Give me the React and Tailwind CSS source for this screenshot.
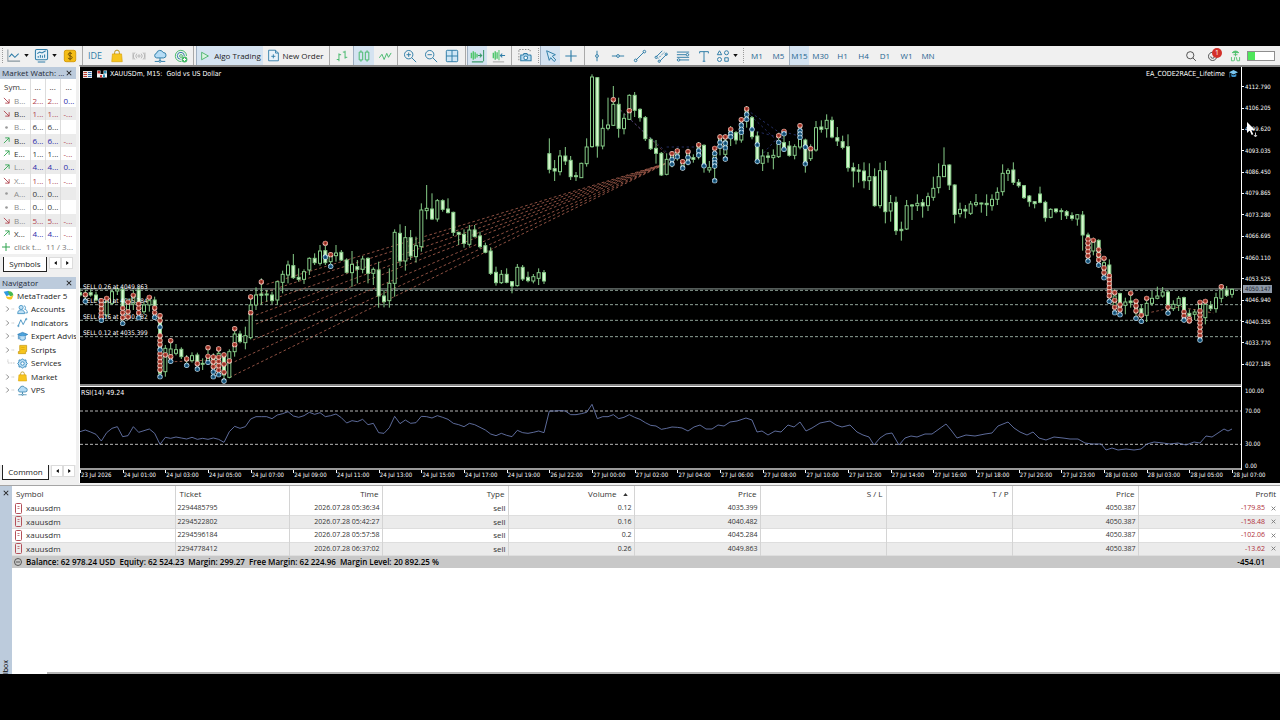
import React from "react";

const FILLED = 1;

/* Bars are [high, bodyTop, bodyBottom, low, filled]; x advances 16 units per bar. */
const SEGMENTS = [
  {
    from: 0,
    base: 339,
    bars: [
      [325, 338, 345, 350, 1], [330, 340, 350, 365, 0], [328, 338, 345, 350, 1], [335, 345, 360, 364, 1],
      [355, 360, 415, 425, 0], [348, 365, 405, 412, 0], [328, 335, 370, 375, 0], [322, 327, 333, 345, 0],
      [325, 328, 380, 425, 1], [355, 370, 400, 418, 0], [330, 352, 372, 390, 0], [322, 330, 370, 405, 1],
      [365, 375, 395, 402, 0], [345, 362, 375, 395, 0], [350, 360, 376, 415, 1], [400, 405, 580, 592, 1],
      [495, 505, 575, 590, 0], [480, 507, 525, 540, 0], [492, 509, 520, 526, 0], [502, 508, 530, 537, 1],
      [525, 535, 541, 552, 1], [517, 527, 542, 548, 0], [518, 525, 550, 564, 1], [535, 550, 553, 570, 0],
      [500, 528, 542, 555, 0], [520, 530, 560, 592, 1], [505, 520, 575, 588, 0], [518, 530, 585, 603, 1],
      [508, 515, 592, 595, 0], [440, 462, 515, 530, 0], [452, 462, 485, 490, 1], [440, 467, 488, 508, 0],
      [350, 375, 473, 478, 0], [322, 345, 375, 390, 0], [295, 342, 346, 375, 1], [330, 342, 345, 365, 0],
      [335, 345, 362, 372, 1], [302, 305, 360, 375, 0], [272, 283, 307, 340, 0], [242, 255, 285, 310, 0],
      [222, 257, 293, 297, 1], [265, 292, 298, 305, 1], [268, 275, 298, 312, 0], [232, 235, 270, 285, 0],
      [220, 235, 248, 255, 1], [195, 213, 250, 257, 0], [185, 212, 248, 255, 1], [218, 225, 245, 262, 0],
      [195, 219, 227, 245, 0], [210, 217, 240, 243, 1], [235, 240, 277, 280, 1], [213, 253, 278, 320, 0],
      [240, 260, 268, 310, 1], [228, 237, 268, 280, 0], [232, 235, 280, 310, 1], [262, 268, 280, 315, 0],
      [245, 270, 348, 383, 1], [330, 348, 365, 382, 1], [265, 310, 362, 383, 0], [148, 157, 310, 350, 0],
      [133, 160, 243, 258, 1], [138, 173, 243, 272, 0], [150, 173, 228, 240, 1], [170, 197, 230, 248, 0],
      [70, 90, 200, 215, 0], [15, 85, 92, 118, 0], [40, 87, 117, 120, 1], [57, 62, 117, 125, 0],
      [58, 62, 88, 95, 1], [55, 87, 98, 100, 1], [95, 97, 157, 168, 1], [155, 157, 163, 195, 1],
      [148, 163, 190, 203, 1], [135, 150, 193, 200, 0], [135, 150, 170, 172, 1], [155, 168, 200, 205, 1],
      [188, 197, 217, 220, 1], [202, 213, 280, 285, 1], [260, 277, 308, 317, 1], [270, 283, 308, 312, 0],
      [265, 283, 307, 310, 1], [303, 305, 318, 340, 1], [252, 262, 317, 320, 0], [255, 262, 297, 303, 1],
      [275, 292, 302, 307, 1], [282, 290, 303, 310, 0], [265, 278, 295, 315, 0], [270, 278, 303, 312, 1],
    ],
  },
  {
    from: 88,
    base: -3,
    bars: [
      [217, 263, 310, 322, 1], [282, 308, 315, 345, 1], [252, 270, 317, 328, 0], [243, 270, 285, 297, 1],
      [270, 283, 332, 342, 1], [318, 329, 332, 345, 1], [290, 292, 335, 336, 0], [217, 243, 293, 302, 0],
      [25, 33, 242, 245, 0], [33, 35, 240, 275, 1], [160, 187, 240, 250, 0], [95, 177, 187, 193, 0],
      [60, 115, 178, 180, 0], [95, 115, 187, 215, 1], [143, 157, 188, 205, 0], [85, 88, 160, 162, 0],
      [78, 88, 133, 153, 1], [127, 130, 155, 167, 1], [150, 155, 218, 225, 1], [215, 220, 248, 252, 1],
      [222, 247, 262, 293, 1], [258, 262, 327, 330, 1], [262, 280, 325, 328, 0], [255, 268, 290, 304, 0],
      [248, 260, 275, 284, 0], [280, 285, 300, 312, 0], [248, 262, 285, 298, 0], [265, 275, 280, 290, 1],
      [228, 245, 265, 280, 0], [235, 238, 300, 320, 1], [285, 305, 312, 320, 0], [240, 262, 300, 348, 0],
      [205, 215, 245, 268, 0], [206, 225, 265, 285, 0], [180, 190, 215, 240, 0], [195, 200, 222, 235, 1],
      [155, 175, 222, 230, 0], [120, 135, 165, 185, 0], [150, 155, 212, 220, 1], [197, 210, 287, 295, 1],
      [250, 270, 292, 315, 0], [258, 270, 274, 290, 1], [250, 268, 275, 310, 0], [200, 235, 272, 276, 0],
      [195, 230, 250, 255, 1], [225, 240, 268, 272, 1], [235, 242, 268, 280, 0], [172, 190, 243, 250, 0],
      [218, 222, 292, 320, 1], [235, 252, 278, 285, 0], [165, 185, 252, 257, 0], [163, 183, 190, 200, 1],
      [145, 163, 188, 215, 0], [152, 163, 213, 217, 1], [183, 215, 225, 240, 1],
    ],
  },
  {
    from: 143,
    base: 99,
    bars: [
      [107, 125, 142, 148, 1], [103, 140, 203, 215, 1], [188, 203, 213, 262, 1], [192, 210, 214, 248, 1],
      [187, 213, 242, 265, 1], [190, 230, 242, 270, 0], [205, 230, 317, 320, 1], [188, 212, 317, 325, 0],
      [183, 212, 335, 370, 1], [285, 308, 333, 365, 0], [290, 307, 392, 405, 1], [365, 388, 392, 422, 1],
      [300, 317, 387, 390, 0], [312, 315, 318, 360, 1], [283, 310, 317, 333, 0], [297, 308, 318, 353, 1],
      [278, 290, 317, 333, 0], [230, 265, 292, 302, 0], [190, 230, 263, 280, 0], [142, 196, 230, 230, 0],
      [193, 195, 255, 270, 1], [253, 255, 343, 370, 1], [308, 328, 341, 352, 0], [315, 328, 333, 355, 1],
      [303, 312, 340, 345, 0], [282, 308, 314, 320, 0], [308, 309, 312, 338, 1], [283, 310, 314, 348, 1],
      [283, 298, 317, 332, 0], [262, 277, 298, 315, 0], [193, 220, 275, 287, 0], [205, 212, 220, 243, 0],
      [187, 210, 247, 255, 1], [237, 247, 257, 263, 1], [255, 257, 293, 297, 1], [285, 288, 305, 320, 1],
      [303, 305, 311, 325, 1], [260, 282, 307, 310, 1], [302, 307, 353, 365, 1], [325, 328, 352, 355, 0],
      [325, 327, 335, 340, 1], [325, 332, 335, 360, 1], [330, 335, 347, 357, 1], [337, 347, 355, 362, 1],
      [342, 344, 357, 377, 0], [333, 345, 405, 452, 1],
    ],
  },
  {
    from: 189,
    base: -3,
    bars: [
      [500, 507, 575, 590, 1], [515, 525, 555, 568, 0], [520, 523, 575, 597, 1], [570, 590, 620, 635, 0],
      [580, 597, 690, 706, 1], [670, 690, 725, 740, 0], [680, 683, 725, 748, 1], [695, 708, 718, 745, 0],
      [680, 705, 710, 725, 1], [698, 710, 740, 757, 0], [715, 728, 750, 766, 1], [698, 712, 748, 768, 0],
      [675, 697, 712, 720, 0], [662, 690, 697, 700, 0], [663, 678, 690, 695, 0], [672, 678, 725, 742, 1],
      [703, 715, 728, 735, 0], [690, 697, 718, 735, 0], [692, 695, 735, 762, 1], [730, 742, 750, 760, 1],
      [730, 738, 745, 762, 0], [705, 715, 800, 822, 0], [710, 715, 755, 775, 0], [705, 718, 728, 735, 1],
      [680, 695, 728, 740, 0], [660, 672, 697, 710, 0], [660, 672, 688, 693, 1], [668, 670, 685, 695, 0],
    ],
  },
];

/* Deals are [bar, sell levels, buy levels]. */
const DEALS = [
  {
    base: 339,
    rows: [
      [1, [344], [364]], [4, [362, 374, 387, 400, 412], [421]], [5, [355], []], [8, [385, 398, 413], [430]],
      [9, [367, 395, 411], []], [10, [346], []], [11, [372, 385, 399], [413]], [13, [352], []],
      [14, [384, 398], [412]], [15, [407, 422, 467, 482, 494, 522, 534, 546, 558, 570], [441, 509, 590]],
      [16, [525], []], [17, [482, 530], [544]], [20, [537], [556]], [22, [551], [567]], [24, [503, 529], [547]],
      [25, [531, 546, 560], [575, 590]], [26, [507, 532, 545, 558, 571], [584]], [27, [525, 553, 577], [603]],
      [28, [543], []], [29, [446, 494], []], [32, [351, 398], []], [34, [306], []], [46, [190], [231]],
      [47, [224], [259]],
    ],
  },
  {
    base: -3,
    rows: [
      [100, [101], []], [103, [134], []], [111, [263], [280, 294]], [112, [255], [272]], [113, [287], [306]],
      [114, [257], [274, 289]], [116, [237], [254, 267]], [117, [], [299]],
      [119, [247], [262, 280, 290, 300, 344]], [120, [213], [229, 241]], [121, [213], [231, 245, 279]],
      [122, [190], [203, 212]], [124, [161], [177, 190, 199]], [125, [129], [145, 160]], [126, [], [190]],
      [127, [], [236, 286]], [131, [209], [229]], [132, [196], [203, 250]], [135, [179], [194, 204, 214]],
      [136, [], [243, 293]], [137, [248], []],
      [189, [520, 532, 545, 557, 570], [585]], [190, [523], []], [191, [551, 567, 582], [597]],
      [192, [577, 606, 620], [635]], [193, [630, 642, 654, 666, 678, 690], [706]], [194, [680, 703, 724], [740]],
      [195, [716, 731], [746]], [197, [682], []], [198, [706, 720, 735], [757]], [199, [748], [766]],
      [200, [697], []], [204, [724], [741]], [207, [738, 750], [762]], [208, [758, 765], []],
      [210, [709, 735, 748, 760, 772, 784, 797, 809], [822]], [211, [706], []], [214, [662], []],
    ],
  },
];

/* Opening points of the trades that all closed at bar 110. */
const FAN = [[560, 652], [528, 684], [528, 714], [528, 744], [528, 771], [519, 819], [464, 884], [449, 931]];

const ORDERS = [
  { y: 670, label: "SELL 0.26 at 4049.863" },
  { y: 713, label: "SELL 0.20 at 4045.284" },
  { y: 760, label: "SELL 0.16 at 4040.482" },
  { y: 809, label: "SELL 0.12 at 4035.399" },
];

const RSI_HEAD = [
  155, 150, 156, 163, 183, 158, 145, 140, 170, 167, 140, 157, 152, 147, 160, 193, 172, 175, 171, 174, 177, 172, 178,
  175, 178, 174, 178, 187, 155, 139, 145, 140, 117, 110, 110, 110, 116, 105, 101, 95, 108, 112, 107, 97, 103, 98, 110,
  107, 102, 113, 129, 122, 125, 118, 134, 130, 158, 160, 143, 109, 131, 120, 130, 128, 109, 110, 114, 107, 112, 118,
  130, 134, 140, 130, 134, 142, 150, 162, 167, 160, 166, 170, 151, 158, 160, 157, 153, 158, 93, 93, 92, 93, 104, 104,
  101, 97, 73, 116, 110, 110, 104, 116, 112, 104, 112, 118, 128, 136, 138, 148, 145, 141, 142,
];
const RSI_TAIL = [
  [682, 428], [688, 431], [694, 427], [700, 425], [706, 429], [712, 429], [718, 425], [724, 426], [730, 422],
  [737, 421], [746, 418], [752, 420], [757, 432], [762, 431], [768, 435], [775, 431], [781, 432], [788, 425],
  [794, 427], [800, 422], [806, 431], [812, 428], [820, 423], [830, 421], [836, 425], [842, 427], [850, 425],
  [857, 432], [863, 435], [869, 437], [874, 445], [880, 438], [886, 434], [892, 433], [899, 445], [905, 438],
  [911, 436], [917, 437], [925, 434], [932, 434], [939, 429], [946, 424], [951, 430], [957, 438], [966, 435],
  [975, 436], [985, 434], [992, 433], [998, 426], [1008, 422], [1014, 428], [1020, 432], [1027, 435], [1033, 432],
  [1039, 438], [1046, 440], [1054, 437], [1063, 438], [1070, 439], [1078, 439], [1085, 443], [1092, 444],
  [1101, 444], [1106, 450], [1112, 448], [1118, 450], [1126, 449], [1134, 450], [1141, 449], [1147, 444],
  [1154, 442], [1163, 443], [1170, 444], [1178, 443], [1186, 445], [1194, 442], [1200, 443], [1206, 436],
  [1212, 437], [1218, 433], [1224, 429], [1228, 431], [1232, 429],
];
const RSI_POINTS = RSI_HEAD.map((y, i) => `${i * 16},${y - 21}`)
  .concat(RSI_TAIL.map(([x, y]) => `${(x - 80) * 3},${(y - 387) * 3}`))
  .join(" ");

const PRICES = [
  "4112.790", "4106.205", "4099.620", "4093.035", "4086.450", "4079.865", "4073.280", "4066.695", "4060.110",
  "4053.525", "4046.940", "4040.355", "4033.770", "4027.185",
];

const TIMES = [
  "23 Jul 2026", "24 Jul 01:00", "24 Jul 03:00", "24 Jul 05:00", "24 Jul 07:00", "24 Jul 09:00", "24 Jul 11:00",
  "24 Jul 13:00", "24 Jul 15:00", "24 Jul 17:00", "24 Jul 19:00", "26 Jul 22:00", "27 Jul 00:00", "27 Jul 02:00",
  "27 Jul 04:00", "27 Jul 06:00", "27 Jul 08:00", "27 Jul 10:00", "27 Jul 12:00", "27 Jul 14:00", "27 Jul 16:00",
  "27 Jul 18:00", "27 Jul 20:00", "27 Jul 23:00", "28 Jul 01:00", "28 Jul 03:00", "28 Jul 05:00", "28 Jul 07:00",
];

const CHART_FONT = "font-['DejaVu_Sans_Condensed','DejaVu_Sans',sans-serif]";

function Glyph({ children, className = "size-[14px] text-[#2f7da8]" }) {
  return (
    <svg
      viewBox="0 0 16 16"
      fill="none"
      stroke="currentColor"
      strokeWidth="1.1"
      className={`shrink-0 ${className}`}
      aria-hidden="true"
    >
      {children}
    </svg>
  );
}

const Caret = () => (
  <svg viewBox="0 0 6 4" className="h-[3px] w-[5px] shrink-0" aria-hidden="true">
    <path d="M0 0h6L3 4z" fill="#111" />
  </svg>
);

function Tool({ label, active, className = "w-[21px]", children }) {
  return (
    <button
      type="button"
      aria-label={label}
      className={`flex h-full shrink-0 items-center justify-center whitespace-nowrap ${className} ${
        active ? "border-l border-[#9fb0c2] bg-[#d5e3f1]" : ""
      }`}
    >
      {children}
    </button>
  );
}

const Sep = ({ className = "w-1" }) => (
  <span className={`flex h-full shrink-0 justify-center ${className}`}>
    <span className="h-full w-px bg-[#a9a9a9]" />
  </span>
);
const Grip = ({ className = "w-1" }) => (
  <span className={`flex h-full shrink-0 justify-center py-[2px] ${className}`}>
    <span className="h-full border-l border-dotted border-[#9a9a9a]" />
  </span>
);

const GREEN = "size-[14px] text-[#46b96b]";

function Bag({ className = "size-[14px]" }) {
  return (
    <Glyph className={className}>
      <path d="M5.3 6V4a2.7 2.7 0 0 1 5.4 0v2" stroke="#b8900c" />
      <path d="M2.8 5.6h10.4l.8 8.9H2z" fill="#f7c51e" stroke="#d9a40b" strokeWidth=".8" />
    </Glyph>
  );
}

function Cloud({ className }) {
  return (
    <Glyph className={className}>
      <path d="M4.2 10.2a2.7 2.7 0 0 1-.2-5.3A4 4 0 0 1 11.6 4a3.1 3.1 0 0 1 .4 6.2z" fill="#b5dcf5" />
      <path d="M8 10.2v3M2 14.2h4.7M9.3 14.2H14" />
      <circle cx="8" cy="14" r="1.2" />
    </Glyph>
  );
}

function Toolbar() {
  return (
    <header className="flex h-[19px] shrink-0 items-center overflow-hidden bg-[#f0f0f0] text-[8px] leading-[12px] text-[#1d1d1d]">
      <Grip />
      <Tool label="Chart profile" className="w-[27px] gap-[3px]">
        <Glyph className="size-[15px] text-[#87969f]">
          <path d="M2 1.5v12.5h13" />
          <path d="M3.5 9.5 6 6.5l3.5 3.5L13.5 6" stroke="#2f7da8" />
        </Glyph>
        <Caret />
      </Tool>
      <Tool label="Templates" className="w-7 gap-[3px]">
        <Glyph className="size-[15px] text-[#2f7da8]">
          <rect x="1.5" y="1.5" width="13" height="11" rx="1.5" fill="#e6f1f8" />
          <path d="m3.5 6 2.5-1.7 2.5 1 4-2.3M4.5 10.5v-2m2.3 2V7.5m2.2 3V8m2.3 2.500V7M4 15h8" />
        </Glyph>
        <Caret />
      </Tool>
      <Tool label="Trade accounts" className="w-[22px]">
        <Glyph className="size-[14px]">
          <rect x="1.5" y="1.500" width="13" height="13" rx="2" fill="#f4bd16" stroke="#d79d08" />
          <path d="M10.300 5.600C9.600 4 6 4.100 6 6.100c0 2.200 4.500 1.400 4.500 3.700 0 2.200-4.200 2.100-4.900.3M8.100 3.200v9.700" stroke="#6f4d00" />
        </Glyph>
      </Tool>
      <Sep className="w-[3px]" />
      <Tool label="IDE" className="w-[22px] text-[9px] text-[#2f7da8]">IDE</Tool>
      <Tool label="Market" className="w-[22px]"><Bag /></Tool>
      <Tool label="Signals">
        <Glyph className="size-[14px] text-[#b4b4b4]">
          <circle cx="8" cy="8" r="1.300" />
          <path d="M5.500 5.300a4 4 0 0 0 0 5.400m5-5.400a4 4 0 0 1 0 5.400M3.300 4a6 6 0 0 0 0 8m9.400-8a6 6 0 0 1 0 8M1.200 4v8m13.600-8v8" />
        </Glyph>
      </Tool>
      <Tool label="Virtual hosting" className="w-[22px]"><Cloud className="size-[14px] text-[#2f7da8]" /></Tool>
      <Tool label="Copy signals" className="w-5">
        <Glyph className={GREEN}>
          <path d="M8.500 14.300A6.400 6.400 0 1 1 14.300 8" />
          <path d="M7.500 11.800A4 4 0 1 1 11.800 8" stroke="#2f7da8" />
          <circle cx="8" cy="8" r="1.600" />
          <circle cx="12" cy="12" r="3.300" fill="#43b765" stroke="none" />
          <path d="M12 10.200v3.600M10.200 12h3.600" stroke="#fff" />
        </Glyph>
      </Tool>
      <Sep className="w-[5px]" />
      <Tool label="Algo Trading" active className="w-[67px] gap-[3px]">
        <Glyph className="size-[12px] text-[#3cae60]"><path d="M3.500 3v10L12.500 8z" fill="#d9f3df" /></Glyph>
        <span>Algo Trading</span>
      </Tool>
      <Tool label="New Order" className="w-16 gap-[3px]">
        <Glyph className="size-[13px] text-[#2f7da8]">
          <path d="M2 1.500h8.500L14 5v9.500H2z" fill="#e9f3fa" />
          <path d="M10.500 1.500V5H14M7.800 6.500v5M5.300 9h5" />
        </Glyph>
        <span>New Order</span>
      </Tool>
      <Sep />
      <Tool label="Bar chart" className="w-[22px]">
        <Glyph className={GREEN}><path d="M4.500 5v9M2 12h2.500M4.500 6.500H7M11.500 2v9M9 3.500h2.500M11.500 9.500H14" /></Glyph>
      </Tool>
      <Tool label="Candlesticks" active>
        <Glyph className={GREEN}><path d="M2.500 3.500h4v9h-4zM9.500 3.500h4v9h-4zM4.500 1.500v2m0 9v2M11.500 1.500v2m0 9v2" /></Glyph>
      </Tool>
      <Tool label="Line chart">
        <Glyph className={GREEN}><path d="m1.500 10 3-4 2.500 6 3-7 2 4.500L15 4.500" /></Glyph>
      </Tool>
      <Sep />
      <Tool label="Zoom in">
        <Glyph><circle cx="6.500" cy="6.500" r="4.800" /><path d="m10 10 5 5M6.500 4v5M4 6.500h5" /></Glyph>
      </Tool>
      <Tool label="Zoom out">
        <Glyph><circle cx="6.500" cy="6.500" r="4.800" /><path d="m10 10 5 5M4 6.500h5" /></Glyph>
      </Tool>
      <Tool label="Tile windows" className="w-[22px]">
        <Glyph><rect x="1.500" y="1.500" width="13" height="13" rx="1" fill="#cfe6f5" /><path d="M8 1.500v13M1.500 8h13" /></Glyph>
      </Tool>
      <Sep />
      <Tool label="Auto scroll" active className="w-5">
        <Glyph className="size-[15px] text-[#4fc76c]">
          <path d="M1.500 5v6M3.500 3.500v9M5.500 4.500v7M7.500 6v4" strokeWidth="1.500" />
          <path d="M8.500 8h4m-2-2 2 2-2 2M14.500 2v12M2 14.800h12" stroke="#3a9a6a" />
        </Glyph>
      </Tool>
      <Tool label="Chart shift" className="w-[23px]">
        <Glyph className="size-[15px] text-[#4fc76c]">
          <path d="M2.500 5v6M4.500 3.500v9M6.500 4.500v7" strokeWidth="1.500" />
          <path d="M8.500 2v11" />
          <path d="M10 8h5m-3-2-2 2 2 2" stroke="#2f7da8" />
          <path d="M2 14.800h12" stroke="#a8a8a8" />
        </Glyph>
      </Tool>
      <Sep className="w-[3px]" />
      <Tool label="Screenshot" className="w-[23px]">
        <Glyph className="size-[15px] text-[#2f7da8]">
          <path d="M2 13V1.500h12V5" stroke="#8a8a8a" strokeDasharray="1.500 1.500" />
          <path d="M4 7.500h2.500L7.500 6h3l1 1.500H14a1 1 0 0 1 1 1v5H4z" fill="#b9dcf3" />
          <circle cx="9.300" cy="10.500" r="2" fill="#fff" />
        </Glyph>
      </Tool>
      <Grip />
      <Tool label="Cursor" active className="w-5">
        <Glyph><path d="m3 2 10 4.500-3.500 1.700 4 4.300-2 1.800-3.800-4.400L6 13z" fill="#cfe6f5" /></Glyph>
      </Tool>
      <Tool label="Crosshair" className="w-[22px]">
        <Glyph><path d="M8 1.500v13M1.500 8h13" strokeWidth="1.300" /></Glyph>
      </Tool>
      <Sep />
      <Tool label="Vertical line"><Glyph><path d="M8 2v12" /><circle cx="8" cy="8" r="1.600" fill="#f0f0f0" /></Glyph></Tool>
      <Tool label="Horizontal line" className="w-[22px]">
        <Glyph><path d="M1 8h14" /><circle cx="8" cy="8" r="1.600" fill="#f0f0f0" /></Glyph>
      </Tool>
      <Tool label="Trend line">
        <Glyph><path d="M3.500 12.500l9-9" /><circle cx="3" cy="13" r="1.500" /><circle cx="13" cy="3" r="1.500" /></Glyph>
      </Tool>
      <Tool label="Equidistant channel" className="w-[22px]">
        <Glyph>
          <path d="m2.500 9 7-7M6.500 14l8-8" /><path d="m4.500 11 8-8" strokeDasharray="1.500 1.200" />
          <circle cx="2.500" cy="9.500" r="1.300" /><circle cx="6" cy="14" r="1.300" /><circle cx="14" cy="6" r="1.300" />
        </Glyph>
      </Tool>
      <Tool label="Fibonacci">
        <Glyph>
          <path d="M1 3.500h14M1 6.500h14M1 9.500h14M1 12.500h14" />
          <circle cx="13" cy="6.500" r="1.400" fill="#f0f0f0" /><circle cx="3" cy="12.500" r="1.400" fill="#f0f0f0" />
        </Glyph>
      </Tool>
      <Tool label="Text"><Glyph><path d="M3 5V3h10v2M8 3v11M6.500 14h3" /></Glyph></Tool>
      <Tool label="Shapes" className="w-[26px] gap-[3px]">
        <Glyph>
          <path d="M4 2 1.500 6.500h5z" /><circle cx="12" cy="4.300" r="2.300" />
          <circle cx="4" cy="12" r="2.300" /><path d="M10 10h4v4h-4z" />
        </Glyph>
        <Caret />
      </Tool>
      <Grip className="w-[6px]" />
      <nav className="flex h-full text-[#1f6590]" aria-label="Timeframes">
        <Tool label="M1" className="w-[22px]">M1</Tool>
        <Tool label="M5">M5</Tool>
        <Tool label="M15" active className="w-5">M15</Tool>
        <Tool label="M30" className="w-[23px]">M30</Tool>
        <Tool label="H1">H1</Tool>
        <Tool label="H4">H4</Tool>
        <Tool label="D1" className="w-[22px]">D1</Tool>
        <Tool label="W1">W1</Tool>
        <Tool label="MN" className="w-[22px]">MN</Tool>
      </nav>
      <div className="ml-auto flex h-full items-center pr-[5px]">
        <Tool label="Search" className="w-[22px]">
          <Glyph className="size-[12px] text-[#333]"><circle cx="7" cy="7" r="4.800" /><path d="m10.500 10.500 4 4" /></Glyph>
        </Tool>
        <Tool label="Notifications" className="relative w-[22px]">
          <Glyph className="size-[12px] text-[#333]"><circle cx="7.500" cy="8.500" r="5.500" /><path d="M5 8.500a2.500 2.500 0 0 0 5 0" /></Glyph>
          <span className="absolute top-[2px] right-[2px] flex size-[10px] items-center justify-center rounded-full bg-[#d3302a] text-[7px] leading-[10px] text-white">
            1
          </span>
        </Tool>
        <Tool label="Connection" className="w-[23px]">
          <Glyph className="size-[13px] text-[#4ec06c]">
            <path d="M4 4.500a5 5 0 0 1 8 0z" fill="#4ec06c" />
            <path d="M8 4.500V9M5.500 7h5M3 10v4.500h3M7 10l-.5 4.500M9 10l1 4.500h3V10" />
          </Glyph>
        </Tool>
        <span className="flex h-[10px] w-7 border border-[#8e8e8e] bg-white">
          <span className="h-full w-[7px] bg-[#4ee65a]" />
        </span>
      </div>
    </header>
  );
}

const UP = "up";
const DOWN = "down";
const FLAT = "flat";
const INK = "text-[#333]";
const GREY = "text-[#8c8c8c]";
const RED = "text-[#b0414b]";
const BLUE = "text-[#2a2aa8]";

const WATCH = [
  [DOWN, "B...", GREY, "2...", "2...", RED, "0...", BLUE],
  [DOWN, "B...", INK, "1...", "1...", RED, "-...", RED],
  [FLAT, "B...", GREY, "6...", "6...", INK, "", INK],
  [UP, "B...", INK, "6...", "6...", BLUE, "-...", RED],
  [UP, "E...", INK, "1...", "1...", INK, "-...", RED],
  [UP, "L...", GREY, "4...", "4...", BLUE, "0...", BLUE],
  [DOWN, "X...", GREY, "1...", "1...", RED, "-...", RED],
  [FLAT, "A...", GREY, "0...", "0...", INK, "", INK],
  [FLAT, "B...", GREY, "0...", "0...", INK, "", INK],
  [DOWN, "B...", GREY, "5...", "5...", RED, "-...", RED],
  [UP, "X...", INK, "4...", "4...", BLUE, "-...", RED],
];

function Direction({ kind }) {
  if (kind === UP)
    return <Glyph className="size-[7px] text-[#2fa34f]"><path d="M2 14 14 2M5 2h9v9" strokeWidth="2" /></Glyph>;
  if (kind === DOWN)
    return <Glyph className="size-[7px] text-[#b0414b]"><path d="m2 2 12 12M14 5v9H5" strokeWidth="2" /></Glyph>;
  return <Glyph className="size-[7px]"><circle cx="8" cy="8" r="3" fill="#999" stroke="none" /></Glyph>;
}

function PanelTitle({ children }) {
  return (
    <div className="flex h-3 shrink-0 items-center justify-between bg-[#bccbdc] pr-1 pl-[2px] leading-[12px] text-[#1e2a38]">
      <h2 className="whitespace-nowrap">{children}</h2>
      <button type="button" aria-label="Close panel" className="flex">
        <svg viewBox="0 0 8 8" className="size-[6px]" aria-hidden="true">
          <path d="m1 1 6 6M7 1 1 7" stroke="#222" strokeWidth="1.400" />
        </svg>
      </button>
    </div>
  );
}

function PanelTabs({ label, className }) {
  return (
    <div className="flex h-[15px] shrink-0 gap-[2px] bg-[#f0f0f0]">
      <button
        type="button"
        className={`flex items-center justify-center border-r border-b border-l border-[#222] bg-white text-[#222] ${className}`}
      >
        {label}
      </button>
      <div className="flex h-[12px]">
        <button type="button" aria-label="Previous tab" className="flex w-3 items-center justify-center border border-[#dcdcdc] bg-white">
          <svg viewBox="0 0 4 6" className="h-1 w-[3px]" aria-hidden="true"><path d="M4 0v6L0 3z" /></svg>
        </button>
        <button type="button" aria-label="Next tab" className="flex w-3 items-center justify-center border border-[#dcdcdc] bg-white">
          <svg viewBox="0 0 4 6" className="h-1 w-[3px]" aria-hidden="true"><path d="M0 0v6l4-3z" /></svg>
        </button>
      </div>
    </div>
  );
}

function MarketWatch() {
  return (
    <section className="flex shrink-0 flex-col">
      <PanelTitle>Market Watch: ...</PanelTitle>
      <table className="w-full table-fixed border-collapse bg-white leading-[12px]">
        <colgroup>
          <col className="w-[30px]" />
          <col className="w-[15px]" />
          <col className="w-[15px]" />
          <col className="w-[16px]" />
        </colgroup>
        <thead>
          <tr className="h-[15px] text-left text-[#333]">
            <th className="border-r border-[#ddd] p-0 pl-1 font-normal">Sym...</th>
            <th className="border-r border-[#ddd] p-0 pl-1 font-normal">...</th>
            <th className="border-r border-[#ddd] p-0 pl-1 font-normal">...</th>
            <th className="p-0 pl-[5px] font-normal">...</th>
          </tr>
        </thead>
        <tbody>
          {WATCH.map(([dir, name, nameTone, bid, ask, tone, change, changeTone], i) => (
            <tr key={i} className="h-[13px] even:bg-[#ebebeb] nth-[3n]:h-[14px]">
              <td className={`border-r border-[#ddd] p-0 ${nameTone}`}>
                <span className="flex items-center gap-[4px] pl-[3px]">
                  <Direction kind={dir} />
                  {name}
                </span>
              </td>
              <td className={`border-r border-[#ddd] p-0 pl-[2px] ${tone}`}>{bid}</td>
              <td className={`border-r border-[#ddd] p-0 pl-[2px] ${tone}`}>{ask}</td>
              <td className={`p-0 pl-[3px] ${changeTone}`}>{change}</td>
            </tr>
          ))}
          <tr className="h-[14px] text-[#777]">
            <td colSpan={4} className="p-0">
              <span className="flex items-center pr-[3px] pl-[2px] whitespace-nowrap">
                <svg viewBox="0 0 8 8" className="mr-[4px] size-[8px]" aria-hidden="true">
                  <path d="M4 0v8M0 4h8" stroke="#2fa34f" />
                </svg>
                click t...
                <span className="ml-auto">11 / 3...</span>
              </span>
            </td>
          </tr>
        </tbody>
      </table>
      <div className="flex h-[23px] flex-col bg-[#f0f0f0] pt-[3px] pl-[3px]">
        <PanelTabs label="Symbols" className="w-[44px]" />
      </div>
    </section>
  );
}

const NAV = [
  ["Accounts", (
    <Glyph key="a" className="size-[11px] text-[#2f86bb]">
      <circle cx="6" cy="5" r="3" fill="#bfe0f5" /><path d="M1 14c0-4 2-5.500 5-5.500s5 1.500 5 5.500z" fill="#bfe0f5" />
      <path d="M10 2.500a2.800 2.800 0 0 1 1 5.200c3 .3 4 2.300 4 5.300h-3" />
    </Glyph>
  )],
  ["Indicators", (
    <Glyph key="i" className="size-[11px] text-[#2f86bb]">
      <path d="m2 12.500 3.500-8.500L9 11l4-8" strokeWidth="1.200" />
      <circle cx="2" cy="13" r="1" /><circle cx="13.500" cy="3" r="1" />
    </Glyph>
  )],
  ["Expert Advisors", (
    <Glyph key="e" className="size-[11px] text-[#2478b5]">
      <path d="M1 5 8 2l7.500 3L8 8.500z" fill="#4da3dc" /><path d="M4 7.500V12c2.500 2 6 2 8 0V7.500M2 6v6" fill="#bfe0f5" />
    </Glyph>
  )],
  ["Scripts", (
    <Glyph key="s" className="size-[11px] text-[#c99a10]">
      <path d="M4 2h10v9h-1.500V14H2v-3h2z" fill="#f7c51e" /><path d="M6 5h5M6 8h5" strokeWidth=".8" />
    </Glyph>
  )],
  ["Services", (
    <Glyph key="v" className="size-[11px] text-[#2f86bb]">
      <path d="m8 1 2 2.200 3-.4.200 3L15 8l-1.800 2.200-.2 3-3-.4L8 15l-2-2.200-3 .4-.2-3L1 8l1.800-2.200.2-3 3 .4z" fill="#bfe0f5" strokeWidth="1.300" />
      <circle cx="8" cy="8" r="2.500" fill="#fff" strokeWidth="1.300" />
    </Glyph>
  )],
  ["Market", <Bag key="m" className="size-[11px]" />],
  ["VPS", <Cloud key="c" className="size-[11px] text-[#2f7da8]" />],
];

function Navigator() {
  return (
    <section className="flex min-h-0 flex-1 flex-col">
      <PanelTitle>Navigator</PanelTitle>
      <div className="flex-1 bg-white">
        <ul className="flex h-[108px] flex-col overflow-hidden whitespace-nowrap text-[#222]">
          <li className="flex flex-1 items-center gap-[3px] pl-[3px]">
            <Glyph className="size-[11px]">
              <path d="M1 2.500 8 1l3 5-6 3z" fill="#2f9ae0" stroke="none" />
              <path d="M7 2c5-1 8 2 8 6l-5 1z" fill="#46b94f" stroke="none" />
              <path d="M4 9c1 4 5 6 9 4l2-5-6 2z" fill="#f5c21f" stroke="none" />
            </Glyph>
            MetaTrader 5
          </li>
          {NAV.map(([name, icon]) => (
            <li key={name} className="flex flex-1 items-center pl-[5px]">
              <svg viewBox="0 0 12 8" className="mr-[2px] h-2 w-[10px] shrink-0" fill="none" aria-hidden="true">
                {name !== "Services" && <path d="m1.500 1 3 3-3 3" stroke="#777" />}
                <path d={name === "Services" ? "M3.500 0v4H12" : "M8 4h4"} stroke="#aaa" strokeDasharray="1 1" />
              </svg>
              {icon}
              <span className="ml-[3px]">{name}</span>
            </li>
          ))}
        </ul>
      </div>
      <div className="flex flex-col bg-[#f0f0f0] pb-[3px] pl-[2px]">
        <PanelTabs label="Common" className="w-[47px]" />
      </div>
    </section>
  );
}

function Deal({ x, y, sell }) {
  return (
    <g transform={`translate(${x} ${y})`}>
      <circle r="8" fill={sell ? "#ecc9c0" : "#c9e0ef"} />
      <path
        d={sell ? "M0 7 7 0 4 -6H-4L-7 0Z" : "M0 -7 7 0 4 6H-4L-7 0Z"}
        fill={sell ? "#b8493b" : "#27688f"}
      />
      <path d={sell ? "M0 -3V2" : "M0 3V-2"} stroke={sell ? "#7d231b" : "#0e3f60"} strokeWidth="4" />
    </g>
  );
}

function PricePlot() {
  return (
    <svg viewBox="0 0 3483 951" preserveAspectRatio="none" className="block h-[317px] w-full" role="img" aria-label="XAUUSDm M15 candlestick chart">
      <path d="M0 665.500H3483" stroke="#6f7a76" strokeWidth="4" />
      {ORDERS.map(({ y }) => (
        <path key={y} d={`M0 ${y}H3483`} stroke="#8fa297" strokeWidth="3" strokeDasharray="9 6" />
      ))}
      <g stroke="#a9604f" strokeWidth="2.500" strokeDasharray="8 7" fill="none">
        {FAN.map(([x, y]) => (
          <path key={y} d={`M${x} ${y}L1764 287`} />
        ))}
        <path d="M284 884 394 879M3170 745 3250 728 3310 718M3310 722 3400 738" />
        <path d="M1610 117 1760 262" stroke="#75444c" />
      </g>
      <g stroke="#35438f" strokeWidth="2" strokeDasharray="7 8" fill="none">
        <path d="M2000 128 2110 205M2000 135 2112 240M2016 190 2112 215M2030 280 2100 205M2112 195 2170 210M1760 240H1856M1620 130 1776 270" />
      </g>
      {SEGMENTS.map(({ from, base, bars }) =>
        bars.map(([high, top, bottom, low, kind], i) => {
          const x = (from + i) * 16;
          return (
            <g key={from + i} stroke="#86cc88" strokeWidth="3">
              <path d={`M${x} ${high + base}V${top + base}M${x} ${bottom + base}V${low + base}`} />
              <rect
                x={x - 4.5}
                y={top + base}
                width="9"
                height={Math.max(bottom - top, 2)}
                fill={kind === FILLED ? "#d4f7cd" : "#000"}
              />
            </g>
          );
        }),
      )}
      <g fill="#fff" className="text-[19px]">
        {ORDERS.map(({ y, label }) => (
          <text key={label} x="9" y={y - 5}>{label}</text>
        ))}
      </g>
      {DEALS.map(({ base, rows }) =>
        rows.map(([bar, sells, buys]) => (
          <g key={bar}>
            {sells.map((y) => <Deal key={`s${y}`} x={bar * 16} y={y + base} sell />)}
            {buys.map((y) => <Deal key={`b${y}`} x={bar * 16} y={y + base} />)}
          </g>
        )),
      )}
    </svg>
  );
}

function Chart() {
  return (
    <section className={`min-w-0 flex-1 border-t-2 border-l border-t-[#868686] border-l-white bg-black text-[7px] leading-[8px] text-white ${CHART_FONT}`}>
      <div className="flex">
        <div className="relative min-w-0 flex-1 border-b border-white">
          <PricePlot />
          <div className="h-[2px] bg-[#868686]" />
          <div className="absolute top-[3px] right-[3px] left-[3px] flex items-center">
            <svg viewBox="0 0 18 14" className="h-[7px] w-[9px]" aria-hidden="true">
              <path d="M0 0h18v14H0z" fill="#e8e8e8" />
              <path d="M1 3h7M1 7h7M1 11h7" stroke="#c0392b" strokeWidth="2" />
              <path d="M10 3h7M10 7h7M10 11h7" stroke="#2b6cb0" strokeWidth="2" />
            </svg>
            <svg viewBox="0 0 20 16" className="ml-[5px] h-2 w-[10px]" aria-hidden="true">
              <path d="M0 1h7v7h6V1h7v14H0z" fill="#eee" />
              <path d="M1 2h5v5H1zM6 10h4v5H6z" fill="#c93b3b" />
              <path d="M14 2h5v5h-5zM12 9h4v6h-4z" fill="#2e8fb4" />
            </svg>
            <h1 className="ml-[3px] whitespace-pre">XAUUSDm, M15:  Gold vs US Dollar</h1>
            <span className="ml-auto">EA_CODE2RACE_Lifetime</span>
            <svg viewBox="0 0 16 14" className="ml-1 h-2 w-[9px]" aria-hidden="true">
              <path d="M0 4 8 0l8 4-8 4z" fill="#7cc6ef" />
              <path d="M4 7v4c2 2 6 2 9 0V7L8 9zM1 5v8h1V5z" fill="#3c93cc" />
            </svg>
          </div>
        </div>
        <div className="relative flex w-[39px] flex-col border-l border-white pt-[9px] pb-3 text-[6px]">
          {PRICES.map((price) => (
            <div key={price} className="flex flex-1 items-center gap-px">
              <span className="h-px w-[2px] bg-white" />
              {price}
            </div>
          ))}
          <div className="absolute top-[218px] left-px bg-[#8d97a6] pr-px pl-[2px] text-[#1c222c]">4050.147</div>
          <svg viewBox="0 0 12 18" className="absolute top-[54px] left-1 h-[18px] w-3" aria-hidden="true">
            <path d="M1 1v11l2.700-2.500 2 4.500 1.600-.7-2-4.300H9z" fill="#fff" />
            <path d="M9.500 11.500v4m-1.500-1.500 1.500 2 1.500-2" stroke="#ccc" fill="none" />
          </svg>
        </div>
      </div>
      <div className="flex">
        <div className="relative min-w-0 flex-1">
          <svg viewBox="0 0 3483 243" preserveAspectRatio="none" className="block h-[81px] w-full" role="img" aria-label="RSI indicator">
            <path d="M0 72H3483M0 172H3483" stroke="#b5b5b5" strokeWidth="3" strokeDasharray="9 6" />
            <polyline points={RSI_POINTS} fill="none" stroke="#6f7fb8" strokeWidth="2.500" />
          </svg>
          <span className="absolute top-[2px] left-px">RSI(14) 49.24</span>
          <div className="h-[2px] bg-[#9a9a9a]" />
        </div>
        <div className="grid w-[39px] grid-rows-[14px_27px_34px_8px] border-l border-white pl-[3px] text-[6px]">
          <span>100.00</span>
          <span className="pt-[6px]">70.00</span>
          <span className="pt-[12px]">30.00</span>
          <span>0.00</span>
        </div>
      </div>
      <ol className="flex h-[13px] overflow-hidden text-[6px] leading-[10px] whitespace-nowrap">
        {TIMES.map((time, i) => (
          <li key={time} className={`flex min-w-0 items-start ${i === TIMES.length - 1 ? "w-12 shrink-0" : "flex-1"}`}>
            <span className="h-[3px] w-px shrink-0 bg-white" />
            {time}
          </li>
        ))}
      </ol>
    </section>
  );
}

const POSITIONS = [
  ["2294485795", "2026.07.28 05:36:34", "0.12", "4035.399", "-179.85"],
  ["2294522802", "2026.07.28 05:42:27", "0.16", "4040.482", "-158.48"],
  ["2294596184", "2026.07.28 05:57:58", "0.2", "4045.284", "-102.06"],
  ["2294778412", "2026.07.28 06:37:02", "0.26", "4049.863", "-13.62"],
];

function Toolbox() {
  const cell = "border-r border-[#d4d4d4] p-0 pr-[2px]";
  const head = "border-r border-[#d4d4d4] p-0 pr-[3px] text-right font-normal";
  return (
    <section className="flex min-h-0 flex-1 border-t border-[#a5a5a5] bg-white">
      <div className="flex w-3 shrink-0 flex-col items-center justify-between bg-[#bccbdc] pt-1">
        <button type="button" aria-label="Close toolbox" className="flex">
          <svg viewBox="0 0 8 8" className="size-[6px]" aria-hidden="true">
            <path d="m1 1 6 6M7 1 1 7" stroke="#222" strokeWidth="1.400" />
          </svg>
        </button>
        <div className="h-[14px] overflow-hidden">
          <span className="block rotate-180 text-[7px] leading-[10px] [writing-mode:vertical-rl]">Toolbox</span>
        </div>
      </div>
      <div className="flex min-w-0 flex-1 flex-col justify-between">
        <table className="w-full table-fixed border-collapse leading-[12px] text-[#333]">
          <colgroup>
            <col className="w-[163px]" />
            <col className="w-[114px]" />
            <col className="w-[93px]" />
            <col className="w-[126px]" />
            <col className="w-[126px]" />
            <col className="w-[126px]" />
            <col className="w-[126px]" />
            <col className="w-[126px]" />
            <col className="w-[126px]" />
            <col className="w-[142px]" />
          </colgroup>
          <thead>
            <tr className="h-4">
              <th className="border-r border-[#d4d4d4] p-0 pl-1 text-left font-normal">Symbol</th>
              <th className="border-r border-[#d4d4d4] p-0 pl-1 text-left font-normal">Ticket</th>
              <th className={head}>Time</th>
              <th className={head}>Type</th>
              <th className={head}>
                <span className="flex items-center justify-end gap-[6px] pr-[3px]">
                  Volume
                  <svg viewBox="0 0 6 4" className="h-[3px] w-[5px]" aria-hidden="true"><path d="M0 4h6L3 0z" fill="#333" /></svg>
                </span>
              </th>
              <th className={head}>Price</th>
              <th className={head}>S / L</th>
              <th className={head}>T / P</th>
              <th className={head}>Price</th>
              <th className="p-0 pr-1 text-right font-normal">Profit</th>
            </tr>
          </thead>
          <tbody className="text-right text-[7px]">
            {POSITIONS.map(([ticket, time, volume, price, profit]) => (
              <tr key={ticket} className="h-[13px] border-b border-[#dedede] even:bg-[#ebebeb] nth-[3n]:h-[14px]">
                <td className={`${cell} text-left text-[8px]`}>
                  <span className="flex items-center gap-1 pl-[3px]">
                    <svg viewBox="0 0 14 22" className="h-[11px] w-[7px]" fill="none" aria-hidden="true">
                      <rect x="1" y="1" width="12" height="20" rx="2" stroke="#b4505a" strokeWidth="2" />
                      <path d="M5 7h4M5 11h4" stroke="#b4505a" strokeWidth="1.500" />
                    </svg>
                    xauusdm
                  </span>
                </td>
                <td className={`${cell} pl-[2px] text-left`}>{ticket}</td>
                <td className={cell}>{time}</td>
                <td className={`${cell} text-[8px]`}>sell</td>
                <td className={cell}>{volume}</td>
                <td className={cell}>{price}</td>
                <td className={cell} />
                <td className={cell} />
                <td className={cell}>4050.387</td>
                <td className="p-0 pr-1 text-[#b0303a]">
                  <span className="flex items-center justify-end gap-[6px]">
                    {profit}
                    <button type="button" aria-label={`Close position ${ticket}`}>
                      <svg viewBox="0 0 8 8" className="size-[5px]" aria-hidden="true">
                        <path d="m1 1 6 6M7 1 1 7" stroke="#777" strokeWidth="1.400" />
                      </svg>
                    </button>
                  </span>
                </td>
              </tr>
            ))}
          </tbody>
          <tfoot>
            <tr className="h-[13px] bg-[#c8c8c8] font-semibold text-black">
              <td colSpan={9} className="p-0">
                <span className="flex items-center gap-1 pl-[2px] whitespace-pre">
                  <svg viewBox="0 0 16 16" className="size-[8px]" fill="none" stroke="#333" strokeWidth="1.500" aria-hidden="true">
                    <circle cx="8" cy="8" r="7" /><path d="M4 8h8" />
                  </svg>
                  Balance: 62 978.24 USD  Equity: 62 524.23  Margin: 299.27  Free Margin: 62 224.96  Margin Level: 20 892.25 %
                </span>
              </td>
              <td className="p-0 pr-[15px] text-right">-454.01</td>
            </tr>
          </tfoot>
        </table>
        <div className="ml-[35px] h-[2px] bg-[#b5b5b5]" />
      </div>
    </section>
  );
}

export default function App() {
  return (
    <div className="flex min-h-screen flex-col bg-black py-[46px] font-['Open_Sans','Noto_Sans',sans-serif] text-[8px]">
      <Toolbar />
      <main className="flex min-h-0 flex-1 flex-col">
        <div className="flex bg-[#f0f0f0] pb-[2px]">
          <aside className="flex w-[79px] shrink-0 flex-col pt-[2px] pr-[3px]">
            <MarketWatch />
            <Navigator />
          </aside>
          <Chart />
        </div>
        <Toolbox />
      </main>
    </div>
  );
}
